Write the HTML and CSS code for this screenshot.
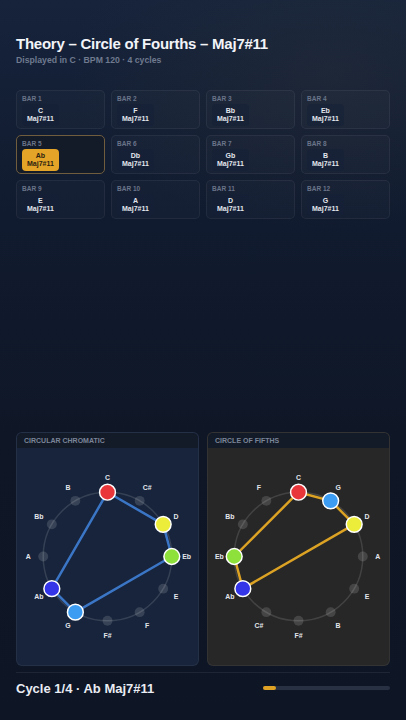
FILE: index.html
```html
<!DOCTYPE html>
<html lang="en">
  <head>
    <meta charset="UTF-8" />
    <meta name="viewport" content="width=device-width, initial-scale=1.0" />
    <title>Circle of Fourths</title>
    <link rel="stylesheet" href="styles.css">
  </head>
  <body>
    <div class="page">
      <header class="top">
        <h1>Theory – Circle of Fourths – Maj7#11</h1>
        <div class="sub">Displayed in C · BPM 120 · 4 cycles</div>
      </header>

      <div class="bars">
        <div class="bar"><div class="bar-no">BAR 1</div><div class="chip">C<br />Maj7#11</div></div>
        <div class="bar"><div class="bar-no">BAR 2</div><div class="chip">F<br />Maj7#11</div></div>
        <div class="bar"><div class="bar-no">BAR 3</div><div class="chip">Bb<br />Maj7#11</div></div>
        <div class="bar"><div class="bar-no">BAR 4</div><div class="chip">Eb<br />Maj7#11</div></div>
        <div class="bar current"><div class="bar-no">BAR 5</div><div class="chip">Ab<br />Maj7#11</div></div>
        <div class="bar"><div class="bar-no">BAR 6</div><div class="chip">Db<br />Maj7#11</div></div>
        <div class="bar"><div class="bar-no">BAR 7</div><div class="chip">Gb<br />Maj7#11</div></div>
        <div class="bar"><div class="bar-no">BAR 8</div><div class="chip">B<br />Maj7#11</div></div>
        <div class="bar"><div class="bar-no">BAR 9</div><div class="chip">E<br />Maj7#11</div></div>
        <div class="bar"><div class="bar-no">BAR 10</div><div class="chip">A<br />Maj7#11</div></div>
        <div class="bar"><div class="bar-no">BAR 11</div><div class="chip">D<br />Maj7#11</div></div>
        <div class="bar"><div class="bar-no">BAR 12</div><div class="chip">G<br />Maj7#11</div></div>
      </div>

      <div class="spacer"></div>

      <div class="panels">
        <section class="panel chromatic">
          <div class="panel-head">CIRCULAR CHROMATIC</div>
          <svg class="wheel" viewBox="0 0 183 217" width="183" height="217">
            <circle class="ring" cx="91.5" cy="108.5" r="65" />
            <polygon class="shape" points="91.5,43.5 147.79,76 156.5,108.5 59,164.79 35.21,141" />
            <!-- idle notes -->
            <circle class="dot" cx="124" cy="52.21" r="5" />
            <circle class="dot" cx="147.79" cy="141" r="5" />
            <circle class="dot" cx="124" cy="164.79" r="5" />
            <circle class="dot" cx="91.5" cy="173.5" r="5" />
            <circle class="dot" cx="26.5" cy="108.5" r="5" />
            <circle class="dot" cx="35.21" cy="76" r="5" />
            <circle class="dot" cx="59" cy="52.21" r="5" />
            <!-- chord tones -->
            <circle class="note c" cx="91.5" cy="43.5" r="8" />
            <circle class="note d" cx="147.79" cy="76" r="8" />
            <circle class="note eb" cx="156.5" cy="108.5" r="8" />
            <circle class="note g" cx="59" cy="164.79" r="8" />
            <circle class="note ab" cx="35.21" cy="141" r="8" />
            <text x="91.5" y="28.5">C</text>
            <text x="131.5" y="39.22">C#</text>
            <text x="160.78" y="68.5">D</text>
            <text x="171.5" y="108.5">Eb</text>
            <text x="160.78" y="148.5">E</text>
            <text x="131.5" y="177.78">F</text>
            <text x="91.5" y="188.5">F#</text>
            <text x="51.5" y="177.78">G</text>
            <text x="22.22" y="148.5">Ab</text>
            <text x="11.5" y="108.5">A</text>
            <text x="22.22" y="68.5">Bb</text>
            <text x="51.5" y="39.22">B</text>
          </svg>
        </section>

        <section class="panel fifths">
          <div class="panel-head">CIRCLE OF FIFTHS</div>
          <svg class="wheel" viewBox="0 0 183 217" width="183" height="217">
            <circle class="ring" cx="91.5" cy="108.5" r="65" />
            <polygon class="shape" points="91.5,43.5 124,52.21 147.79,76 35.21,141 26.5,108.5" />
            <circle class="dot" cx="156.5" cy="108.5" r="5" />
            <circle class="dot" cx="147.79" cy="141" r="5" />
            <circle class="dot" cx="124" cy="164.79" r="5" />
            <circle class="dot" cx="91.5" cy="173.5" r="5" />
            <circle class="dot" cx="59" cy="164.79" r="5" />
            <circle class="dot" cx="35.21" cy="76" r="5" />
            <circle class="dot" cx="59" cy="52.21" r="5" />
            <circle class="note c" cx="91.5" cy="43.5" r="8" />
            <circle class="note g" cx="124" cy="52.21" r="8" />
            <circle class="note d" cx="147.79" cy="76" r="8" />
            <circle class="note ab" cx="35.21" cy="141" r="8" />
            <circle class="note eb" cx="26.5" cy="108.5" r="8" />
            <text x="91.5" y="28.5">C</text>
            <text x="131.5" y="39.22">G</text>
            <text x="160.78" y="68.5">D</text>
            <text x="171.5" y="108.5">A</text>
            <text x="160.78" y="148.5">E</text>
            <text x="131.5" y="177.78">B</text>
            <text x="91.5" y="188.5">F#</text>
            <text x="51.5" y="177.78">C#</text>
            <text x="22.22" y="148.5">Ab</text>
            <text x="11.5" y="108.5">Eb</text>
            <text x="22.22" y="68.5">Bb</text>
            <text x="51.5" y="39.22">F</text>
          </svg>
        </section>
      </div>

      <footer class="foot">
        <div class="now">Cycle 1/4 · Ab Maj7#11</div>
        <div class="progress"><div class="progress-fill" style="width: 10%"></div></div>
      </footer>
    </div>
  </body>
</html>
```

FILE: styles.css
```css
html,
body {
  margin: 0;
  height: 100%;
}
body {
  font-family: "Liberation Sans", Arial, sans-serif;
  color: #e6e9ef;
  background:
    radial-gradient(ellipse 260px 160px at 330px 70px, rgba(70, 70, 60, 0.18), transparent),
    linear-gradient(180deg, #16233b 0%, #111b2f 30%, #0f1727 60%, #0e1525 100%);
}
.page {
  box-sizing: border-box;
  height: 720px;
  padding: 0 16px 16px;
  display: flex;
  flex-direction: column;
}
.top {
  padding-top: 34px;
}
h1 {
  margin: 0;
  font-size: 15px;
  line-height: 20px;
  letter-spacing: -0.25px;
  font-weight: bold;
  color: #f2f4f8;
}
.sub {
  font-size: 8.7px;
  line-height: 12px;
  font-weight: bold;
  color: #6f7a8f;
}

.bars {
  margin-top: 24px;
  display: grid;
  grid-template-columns: repeat(4, 1fr);
  gap: 6px;
}
.bar {
  height: 39px;
  box-sizing: border-box;
  padding: 4px 5px;
  border: 1px solid rgba(255, 255, 255, 0.06);
  border-radius: 5px;
  background: rgba(255, 255, 255, 0.02);
}
.bar.current {
  border-color: #6f5d3e;
  background: #131a28;
}
.bar-no {
  font-size: 6.5px;
  line-height: 8px;
  font-weight: bold;
  color: #6a7489;
}
.chip {
  display: inline-block;
  margin-top: 1px;
  padding: 3px 5px;
  border-radius: 4px;
  font-size: 7px;
  line-height: 8px;
  font-weight: bold;
  text-align: center;
  color: #e3e7ee;
  background: rgba(20, 30, 55, 0.45);
}
.current .chip {
  background: #e4a427;
  color: #2b2210;
}

.spacer {
  flex: 1;
}

.panels {
  display: grid;
  grid-template-columns: 1fr 1fr;
  gap: 8px;
}
.panel {
  border: 1px solid rgba(255, 255, 255, 0.06);
  border-radius: 6px;
  overflow: hidden;
}
.panel-head {
  height: 15px;
  line-height: 16px;
  padding-left: 7px;
  font-size: 7px;
  font-weight: bold;
  color: #7b8598;
  background: #131a28;
}
.chromatic {
  background: #17243b;
}
.fifths {
  background: #272727;
}
.wheel {
  display: block;
  width: 100%;
  height: 217px;
}
.ring {
  fill: none;
  stroke: rgba(255, 255, 255, 0.13);
  stroke-width: 1.5;
}
.shape {
  fill: none;
  stroke-width: 2.5;
  stroke-linejoin: round;
}
.chromatic .shape {
  stroke: #3b76c6;
}
.fifths .shape {
  stroke: #dca224;
}
.dot {
  fill: rgba(255, 255, 255, 0.14);
}
.note {
  stroke: #ffffff;
  stroke-width: 1.5;
}
.note.c { fill: #e8363a; }
.note.d { fill: #ecec3a; }
.note.eb { fill: #8ee03a; }
.note.g { fill: #3c9cf2; }
.note.ab { fill: #3434e8; }
.wheel text {
  font-family: "Liberation Sans", Arial, sans-serif;
  font-size: 7px;
  font-weight: bold;
  fill: #e3e6ec;
  text-anchor: middle;
  dominant-baseline: central;
}

.foot {
  margin-top: 6px;
  border-top: 1px solid rgba(255, 255, 255, 0.07);
  padding: 7px 0 8px;
  height: 16px;
  display: flex;
  align-items: center;
  justify-content: space-between;
}
.now {
  font-size: 13px;
  font-weight: bold;
  color: #e9ecf2;
}
.progress {
  width: 127px;
  height: 4px;
  border-radius: 2px;
  background: #283143;
}
.progress-fill {
  height: 100%;
  border-radius: 2px;
  background: #e0a224;
}
```
